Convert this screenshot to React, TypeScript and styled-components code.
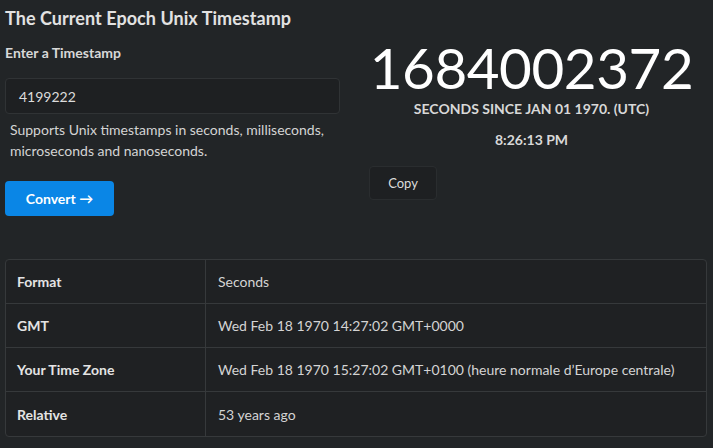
import React from "react";
import styled, { createGlobalStyle } from "styled-components";

const Global = createGlobalStyle`
  html, body { margin: 0; padding: 0; background: #222527; }
  body { font-family: Lato, "Open Sans", sans-serif; color: #dcdcdc; }
  * { box-sizing: border-box; }
`;

const Page = styled.div`
  width: 713px;
  height: 448px;
  padding: 4px 6px 0 5px;
  overflow: hidden;
`;

const Title = styled.h1`
  margin: 0;
  font-size: 18px;
  font-weight: 700;
  line-height: 28px;
  color: #e2e2e2;
  letter-spacing: 0.05px;
`;

const Top = styled.div`
  display: grid;
  grid-template-columns: 351px 1fr;
  margin-top: 11px;
`;

const Left = styled.div`
  display: flex;
  flex-direction: column;
  padding-right: 16px;
`;

const Label = styled.label`
  font-size: 14px;
  font-weight: 700;
  color: #d8d8d8;
  line-height: 20px;
`;

const Input = styled.div`
  margin-top: 15px;
  height: 36px;
  border: 1px solid #303335;
  border-radius: 4px;
  background: #1e2022;
  padding: 0 13px;
  display: flex;
  align-items: center;
  font-size: 14px;
  color: #dcdcdc;
`;

const Help = styled.p`
  margin: 5px 0 0 5px;
  font-size: 14px;
  line-height: 21px;
  color: #d4d4d4;
`;

const Primary = styled.button`
  margin-top: 20px;
  width: 109px;
  height: 35px;
  border: none;
  border-radius: 4px;
  background: #0a86e6;
  color: #ffffff;
  font-family: inherit;
  font-size: 14px;
  font-weight: 700;
  cursor: pointer;
`;

const Right = styled.div`
  display: flex;
  flex-direction: column;
  align-items: center;
`;

const Big = styled.div`
  font-size: 56.5px;
  line-height: 64px;
  margin-top: -8px;
  font-weight: 400;
  color: #ffffff;
  letter-spacing: -0.4px;
`;

const Caps = styled.div`
  font-size: 14px;
  font-weight: 700;
  color: #d8d8d8;
  line-height: 20px;
  margin-top: 0;
`;

const Time = styled(Caps)`
  margin-top: 11px;
`;

const Copy = styled.button`
  align-self: flex-start;
  margin: 16px 0 0 13px;
  width: 68px;
  height: 34px;
  background: #1e2022;
  border: 1px solid #2a2d2f;
  border-radius: 4px;
  color: #dcdcdc;
  font-family: inherit;
  font-size: 13px;
  cursor: pointer;
`;

const Table = styled.div`
  margin-top: 43px;
  border: 1px solid #36393b;
  border-radius: 4px;
  background: #1f2123;
  overflow: hidden;
`;

const Row = styled.div<{ $last?: boolean }>`
  display: grid;
  grid-template-columns: 200px 1fr;
  height: 44px;
  border-bottom: ${(p) => (p.$last ? "none" : "1px solid #36393b")};
`;

const Key = styled.div`
  display: flex;
  align-items: center;
  padding-left: 11px;
  font-size: 14px;
  font-weight: 700;
  color: #e4e4e4;
  border-right: 1px solid #36393b;
`;

const Val = styled.div`
  display: flex;
  align-items: center;
  padding-left: 12px;
  font-size: 14px;
  color: #d4d4d4;
`;

const rows = [
  ["Format", "Seconds"],
  ["GMT", "Wed Feb 18 1970 14:27:02 GMT+0000"],
  ["Your Time Zone", "Wed Feb 18 1970 15:27:02 GMT+0100 (heure normale d’Europe centrale)"],
  ["Relative", "53 years ago"],
];

export default function App() {
  return (
    <Page>
      <Global />
      <Title>The Current Epoch Unix Timestamp</Title>
      <Top>
        <Left>
          <Label>Enter a Timestamp</Label>
          <Input>4199222</Input>
          <Help>
            Supports Unix timestamps in seconds, milliseconds,
            <br />
            microseconds and nanoseconds.
          </Help>
          <Primary>Convert →</Primary>
        </Left>
        <Right>
          <Big>1684002372</Big>
          <Caps>SECONDS SINCE JAN 01 1970. (UTC)</Caps>
          <Time>8:26:13 PM</Time>
          <Copy>Copy</Copy>
        </Right>
      </Top>
      <Table>
        {rows.map(([k, v], i) => (
          <Row key={k} $last={i === rows.length - 1}>
            <Key>{k}</Key>
            <Val>{v}</Val>
          </Row>
        ))}
      </Table>
    </Page>
  );
}
